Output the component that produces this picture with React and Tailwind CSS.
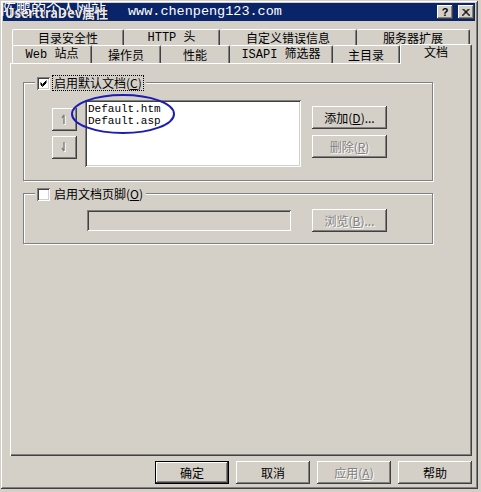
const raised = "bg-[#d4d0c8] shadow-[inset_-1px_-1px_#404040,inset_1px_1px_#ffffff,inset_-2px_-2px_#808080,inset_2px_2px_#d4d0c8]";
const raisedDefault = "bg-[#d4d0c8] border border-black shadow-[inset_-1px_-1px_#404040,inset_1px_1px_#ffffff,inset_-2px_-2px_#808080,inset_2px_2px_#d4d0c8]";
const sunken = "shadow-[inset_1px_1px_#808080,inset_-1px_-1px_#ffffff,inset_2px_2px_#404040,inset_-2px_-2px_#d4d0c8]";
const disabledText = "text-[#808080] [text-shadow:1px_1px_0_#ffffff]";
const mono = "font-['Liberation_Mono','Noto_Sans_CJK_SC',monospace]";

function Btn({ children, w = "w-[75px]", disabled, def }) {
  return (
    <div className={`${w} h-[23px] flex items-center justify-center leading-[14px] ${def ? raisedDefault : raised} ${disabled ? disabledText : "text-black"}`}>
      {children}
    </div>
  );
}

function Tab({ w, children, first }) {
  return (
    <div className={`${w} h-full flex items-center justify-center leading-[12px] border-t border-t-white ${first ? "border-l border-l-white" : ""} border-r border-r-[#404040] shadow-[inset_-1px_0_#808080] rounded-t-[2px]`}>
      {children}
    </div>
  );
}

function Check({ checked }) {
  return (
    <div className={`w-[13px] h-[13px] bg-white shrink-0 flex items-center justify-center ${sunken}`}>
      {checked && (
        <svg width="9" height="9" viewBox="0 0 9 9">
          <path d="M1.5 3.5 L3.5 5.5 L7.5 1.5 M1.5 4.5 L3.5 6.5 L7.5 2.5 M1.5 5.5 L3.5 7.5 L7.5 3.5" stroke="#000" strokeWidth="1" fill="none" />
        </svg>
      )}
    </div>
  );
}

function Arrow({ up }) {
  const d = up ? "M4 2 L4 11 M4 2 L2 5" : "M4 1 L4 10 M4 10 L2 7";
  return (
    <svg width="9" height="13" viewBox="0 0 9 13">
      <g transform="translate(1,1)">
        <path d={d} stroke="#ffffff" strokeWidth="1.4" fill="none" />
      </g>
      <path d={d} stroke="#808080" strokeWidth="1.4" fill="none" />
    </svg>
  );
}

export default function App() {
  return (
    <div className="w-[481px] h-[492px] bg-[#d4d0c8] relative overflow-hidden font-['Noto_Sans_CJK_SC',sans-serif] text-[12px] text-black">
      <div className="w-[478px] h-[489px] p-[3px] flex flex-col shadow-[inset_1px_1px_#d4d0c8,inset_-1px_-1px_#404040,inset_2px_2px_#ffffff,inset_-2px_-2px_#808080]">
        {/* Title bar */}
        <div className="h-[18px] shrink-0 bg-[#0a246a] relative flex items-center justify-end gap-[5px] pr-[1px]">
          <span className="absolute left-[-2px] top-[-3px] text-[15px] leading-none text-white whitespace-nowrap">陈鹏的个人网站</span>
          <span className="absolute left-[2px] top-[3px] text-[13px] font-bold leading-none text-[#e8e8f0] whitespace-nowrap [text-shadow:1px_0_0_#000]">UserttraDev属性</span>
          <span className={`absolute left-[125px] top-[1px] text-[13.5px] leading-[16px] text-white whitespace-nowrap ${mono}`}>www.chenpeng123.com</span>
          <div className={`w-[16px] h-[14px] flex items-center justify-center text-[11px] font-bold leading-none font-['Liberation_Sans',sans-serif] ${raised}`}>?</div>
          <div className={`w-[16px] h-[14px] flex items-center justify-center ${raised}`}>
            <svg width="8" height="7" viewBox="0 0 8 7">
              <path d="M0.5 0 L7.5 7 M7.5 0 L0.5 7 M1.5 0 L8.5 7 M6.5 0 L-0.5 7" stroke="#000" strokeWidth="1" />
            </svg>
          </div>
        </div>

        {/* Tab rows */}
        <div className="mt-[8px] ml-[9px] h-[16px] flex">
          <Tab w="w-[112px]" first>目录安全性</Tab>
          <Tab w="w-[96px]"><span className={mono}>HTTP 头</span></Tab>
          <Tab w="w-[137px]">自定义错误信息</Tab>
          <Tab w="w-[113px]">服务器扩展</Tab>
        </div>
        <div className="ml-[9px] h-[18px] flex items-start">
          <Tab w="w-[80px]" first><span className={mono}>Web 站点</span></Tab>
          <Tab w="w-[69px]">操作员</Tab>
          <Tab w="w-[69px]">性能</Tab>
          <Tab w="w-[103px]"><span className={mono}>ISAPI 筛选器</span></Tab>
          <Tab w="w-[67px]">主目录</Tab>
          <div className="relative z-10 -mt-[1px] w-[72px] h-[20px] bg-[#d4d0c8] border-t border-l border-white border-r border-r-[#404040] shadow-[inset_-1px_0_#808080] rounded-t-[2px] flex justify-center pt-[1px] leading-[12px]">
            文档
          </div>
        </div>

        {/* Panel */}
        <div className="ml-[7px] w-[462px] h-[393px] shrink-0 flex flex-col shadow-[inset_1px_1px_#ffffff,inset_-1px_-1px_#404040,inset_-2px_-2px_#808080]">
          {/* Group 1 */}
          <div className="relative mt-[19px] ml-[13px] w-[410px] h-[99px] border border-[#808080] shadow-[inset_1px_1px_#ffffff,1px_1px_#ffffff]">
            <div className="absolute left-[11px] top-[-7px] bg-[#d4d0c8] pl-[2px] pr-[3px] flex items-center gap-[3px]">
              <Check checked />
              <span className="leading-[14px] px-[1px] outline-1 outline-dotted outline-black">启用默认文档(<u>C</u>)</span>
            </div>
            <div className="flex pt-[17px] pl-[28px]">
              <div className="mt-[8px] flex flex-col gap-[5px]">
                <div className={`w-[25px] h-[23px] flex items-center justify-center ${raised}`}><Arrow up /></div>
                <div className={`w-[25px] h-[23px] flex items-center justify-center ${raised}`}><Arrow /></div>
              </div>
              <div className={`ml-[8px] w-[216px] h-[67px] bg-white pt-[3px] pl-[3px] ${sunken}`}>
                <div className="font-['Liberation_Mono',monospace] text-[11px] leading-[12px]">Default.htm</div>
                <div className="font-['Liberation_Mono',monospace] text-[11px] leading-[12px]">Default.asp</div>
              </div>
              <div className="ml-[11px] mt-[6px] flex flex-col gap-[6px]">
                <Btn>添加(<u>D</u>)...</Btn>
                <Btn disabled>删除(<u>R</u>)</Btn>
              </div>
            </div>
          </div>

          {/* Group 2 */}
          <div className="relative mt-[12px] ml-[13px] w-[410px] h-[51px] border border-[#808080] shadow-[inset_1px_1px_#ffffff,1px_1px_#ffffff]">
            <div className="absolute left-[11px] top-[-7px] bg-[#d4d0c8] pl-[2px] pr-[3px] flex items-center gap-[4px]">
              <Check />
              <span className="leading-[14px]">启用文档页脚(<u>O</u>)</span>
            </div>
            <div className="flex items-center pt-[15px] pl-[63px]">
              <div className={`w-[204px] h-[21px] bg-[#d4d0c8] ${sunken}`} />
              <div className="ml-[21px]">
                <Btn disabled>浏览(<u>B</u>)...</Btn>
              </div>
            </div>
          </div>
        </div>

        {/* Bottom buttons */}
        <div className="mt-[5px] flex justify-end gap-[7px] pr-[3px]">
          <Btn w="w-[74px]" def>确定</Btn>
          <Btn w="w-[74px]">取消</Btn>
          <Btn w="w-[74px]" disabled>应用(<u>A</u>)</Btn>
          <Btn w="w-[74px]">帮助</Btn>
        </div>
      </div>

      {/* Blue annotation ellipse */}
      <svg className="absolute left-[70px] top-[92px]" width="110" height="46" viewBox="0 0 110 46">
        <ellipse cx="53" cy="22" rx="51" ry="19" fill="none" stroke="#1c1cb8" strokeWidth="2" />
      </svg>
    </div>
  );
}
